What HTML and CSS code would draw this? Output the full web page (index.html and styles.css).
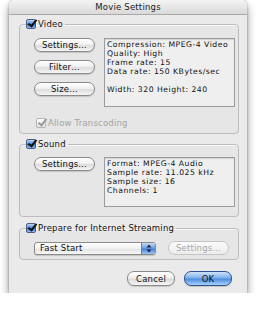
FILE: index.html
```html
<!DOCTYPE html>
<html lang="en">
<head>
    <meta charset="UTF-8">
    <title>Movie Settings</title>
    <link rel="stylesheet" href="styles.css">
</head>
<body>
    <div class="window">
        <div class="titlebar">Movie Settings</div>
        <div class="window-body">
            <fieldset class="group group-video">
                <legend><span class="check"></span>Video</legend>
                <div class="group-row">
                    <div class="button-col">
                        <button class="btn">Settings…</button>
                        <button class="btn">Filter…</button>
                        <button class="btn">Size…</button>
                    </div>
                    <div class="info info-video">
                        <div>Compression: MPEG-4 Video</div>
                        <div>Quality: High</div>
                        <div>Frame rate: 15</div>
                        <div>Data rate: 150 KBytes/sec</div>
                        <div class="info-gap"></div>
                        <div>Width: 320 Height: 240</div>
                    </div>
                </div>
                <div class="check-row disabled"><span class="check"></span>Allow Transcoding</div>
            </fieldset>

            <fieldset class="group group-sound">
                <legend><span class="check"></span>Sound</legend>
                <div class="group-row">
                    <div class="button-col">
                        <button class="btn">Settings…</button>
                    </div>
                    <div class="info info-sound">
                        <div>Format: MPEG-4 Audio</div>
                        <div>Sample rate: 11.025 kHz</div>
                        <div>Sample size: 16</div>
                        <div>Channels: 1</div>
                    </div>
                </div>
            </fieldset>

            <fieldset class="group group-stream">
                <legend><span class="check"></span>Prepare for Internet Streaming</legend>
                <div class="stream-row">
                    <div class="popup">
                        <span class="popup-label">Fast Start</span>
                        <span class="popup-arrows">
                            <svg width="6" height="9" viewBox="0 0 6 9"><path d="M3 0.5 L5.5 3.5 H0.5 Z M3 8.5 L5.5 5.5 H0.5 Z" fill="#1b2a4a"/></svg>
                        </span>
                    </div>
                    <button class="btn" disabled>Settings…</button>
                </div>
            </fieldset>

            <div class="actions">
                <button class="btn">Cancel</button>
                <button class="btn btn-default">OK</button>
            </div>
        </div>
    </div>
</body>
</html>
```

FILE: styles.css
```css
body {
    margin: 0;
    background: #fff;
    font-family: 'DejaVu Sans', 'Open Sans', sans-serif;
    color: #111;
}

.window {
    width: 238px;
    height: 293px;
    margin-left: 9px;
    background: #eaeaea;
    border-radius: 5px 5px 0 0;
    box-shadow: 0 5px 9px rgba(0, 0, 0, 0.45), 0 0 2px rgba(0, 0, 0, 0.35);
    display: flex;
    flex-direction: column;
}

.titlebar {
    height: 14px;
    line-height: 14px;
    text-align: center;
    font-size: 8.5px;
    letter-spacing: 0.2px;
    color: #222;
    background: linear-gradient(to bottom, #f4f4f4, #d9d9d9);
    border-bottom: 1px solid #a9a9a9;
    border-radius: 5px 5px 0 0;
}

.window-body {
    padding: 4px 8px 0 10px;
    display: flex;
    flex-direction: column;
}

.group {
    margin: 0;
    border: 1px solid #bdbdbd;
    border-radius: 4px;
    background: rgba(0, 0, 0, 0.015);
    box-shadow: inset 0 1px 0 #f8f8f8;
    min-width: 0;
}

.group legend {
    margin-left: -8px;
    padding: 0 2px 0 0;
    height: 10px;
    display: flex;
    align-items: center;
    gap: 2px;
    font-size: 8.5px;
    letter-spacing: 0.2px;
    line-height: 10px;
}

.group-video {
    padding: 9px 3px 5px 14px;
}

.group-sound {
    margin-top: 5px;
    padding: 8px 3px 9px 14px;
}

.group-stream {
    margin-top: 6px;
    padding: 8px 3px 4px 14px;
}

.group-row {
    display: flex;
    gap: 9px;
}

.button-col {
    display: flex;
    flex-direction: column;
    gap: 8px;
}

.btn {
    width: 61px;
    height: 14px;
    padding: 0;
    font-family: inherit;
    font-size: 8.5px;
    letter-spacing: 0.2px;
    line-height: 12px;
    color: #111;
    border: 1px solid #8a8a8a;
    border-radius: 7px;
    background: linear-gradient(to bottom, #ffffff 0%, #f1f1f1 45%, #dcdcdc 55%, #f6f6f6 100%);
    box-shadow: 0 1px 1px rgba(0, 0, 0, 0.15);
}

.btn:disabled {
    color: #a8a8a8;
    border-color: #c4c4c4;
    background: linear-gradient(to bottom, #fbfbfb, #ececec);
    box-shadow: none;
}

.info {
    width: 129px;
    padding: 1px 0 0 2px;
    font-size: 7.7px;
    letter-spacing: 0.5px;
    line-height: 9px;
    background: #efefef;
    border: 1px solid #9c9c9c;
    box-shadow: inset 0 1px 1px rgba(0, 0, 0, 0.12);
    white-space: nowrap;
}

.info div {
    height: 9px;
}

.info-video {
    height: 66px;
}

.info-sound {
    height: 47px;
}

.check {
    width: 10px;
    height: 10px;
    box-sizing: border-box;
    border: 1px solid #4a5f86;
    border-radius: 2px;
    background: linear-gradient(to bottom, #b9d3f4 0%, #5f93dc 45%, #3a74cf 55%, #8fbdf2 100%);
    position: relative;
    flex-shrink: 0;
}

.check::after {
    content: '';
    position: absolute;
    left: 3px;
    top: -2px;
    width: 3px;
    height: 7px;
    border: solid #111;
    border-width: 0 2px 2px 0;
    transform: rotate(38deg);
}

.check-row {
    margin-top: 11px;
    padding-left: 2px;
    height: 10px;
    display: flex;
    align-items: center;
    gap: 2px;
    font-size: 8.5px;
    letter-spacing: 0.2px;
}

.check-row.disabled {
    color: #a3a3a3;
}

.check-row.disabled .check {
    border-color: #b5b5b5;
    background: linear-gradient(to bottom, #fcfcfc, #e3e3e3);
}

.check-row.disabled .check::after {
    border-color: #9a9a9a;
}

.stream-row {
    display: flex;
    align-items: center;
    gap: 12px;
}

.popup {
    width: 122px;
    height: 13px;
    box-sizing: border-box;
    display: flex;
    border: 1px solid #8a8a8a;
    border-radius: 3px;
    background: linear-gradient(to bottom, #ffffff, #f0f0f0 50%, #e2e2e2 51%, #f7f7f7);
    box-shadow: 0 1px 1px rgba(0, 0, 0, 0.15);
    overflow: hidden;
}

.popup-label {
    flex: 1;
    padding-left: 5px;
    font-size: 8.5px;
    letter-spacing: 0.2px;
    line-height: 11px;
}

.popup-arrows {
    width: 13px;
    display: flex;
    align-items: center;
    justify-content: center;
    border-left: 1px solid #5a7fb8;
    background: linear-gradient(to bottom, #c7dcf6 0%, #6ea0e0 45%, #4a82d6 55%, #9cc6f4 100%);
}

.actions {
    margin-top: 11px;
    padding-right: 7px;
    display: flex;
    justify-content: flex-end;
    gap: 9px;
}

.actions .btn {
    width: 48px;
    height: 15px;
}

.btn-default {
    border-color: #2f4f8a;
    background: linear-gradient(to bottom, #cfe2fa 0%, #7db0ea 45%, #4d8ddf 55%, #a6d3fb 100%);
}
```
